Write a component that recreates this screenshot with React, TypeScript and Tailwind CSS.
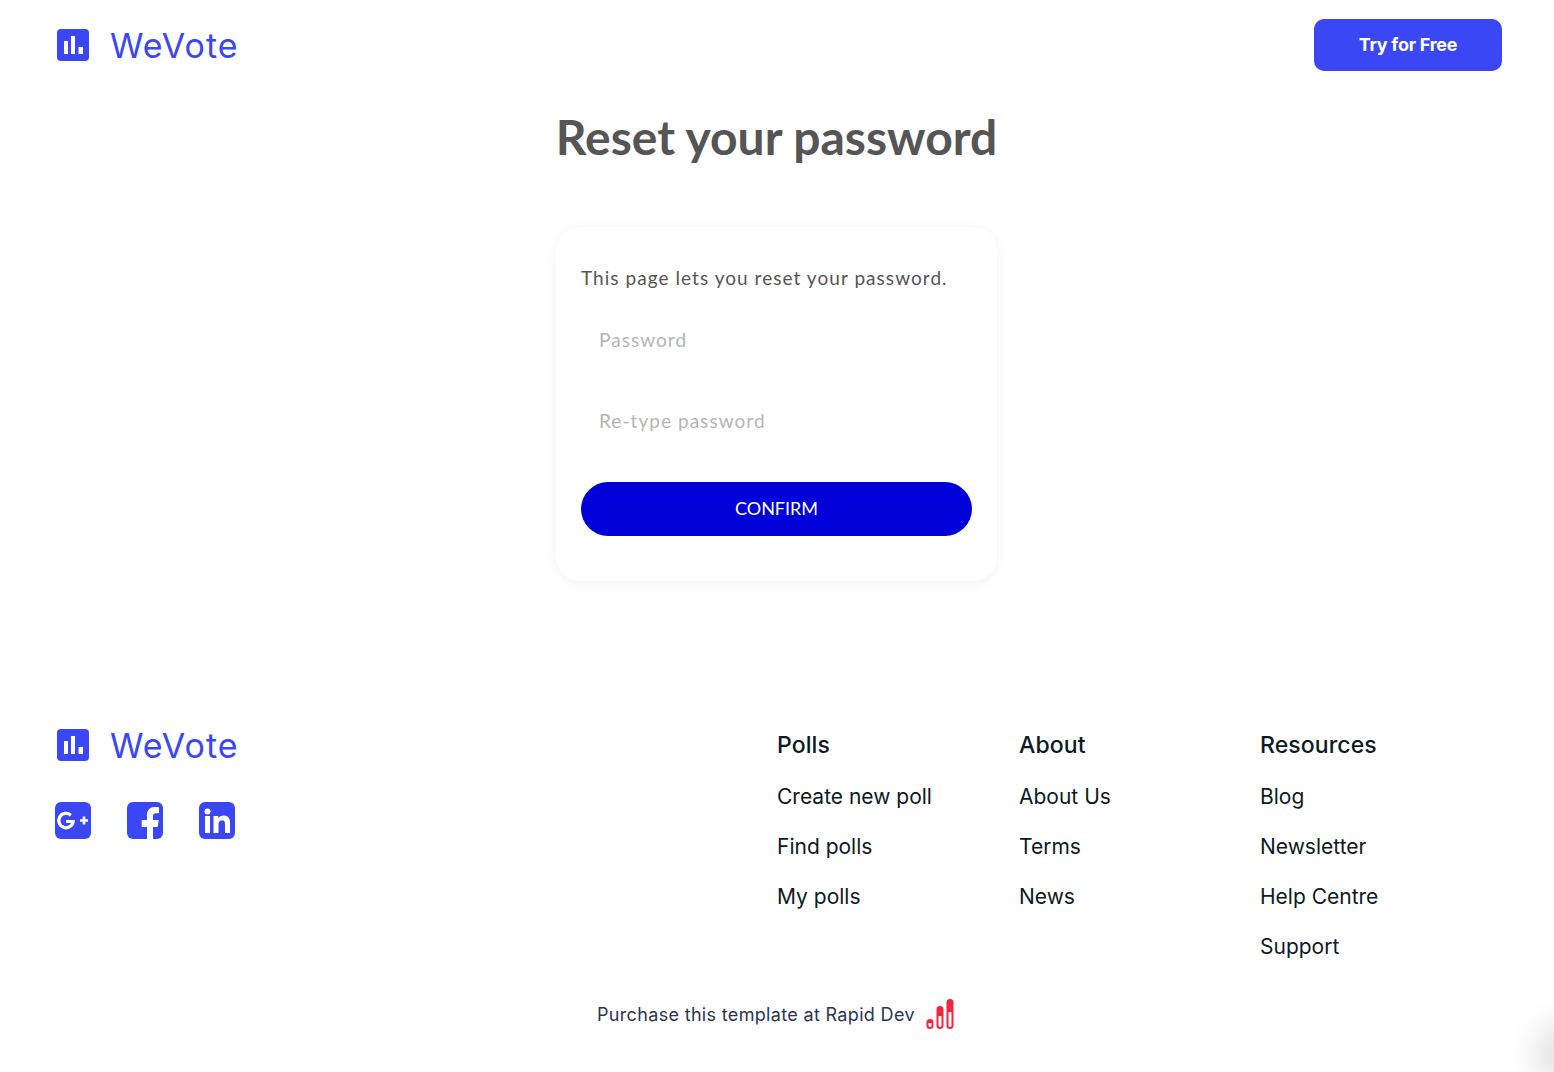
import { useState } from "react";

const poppins = "font-['Inter',sans-serif]";
const lato = "font-['Lato',sans-serif]";

const columns = [
  { title: "Polls", width: "w-[242px]", links: ["Create new poll", "Find polls", "My polls"] },
  { title: "About", width: "w-[241px]", links: ["About Us", "Terms", "News"] },
  { title: "Resources", width: "w-[242px]", links: ["Blog", "Newsletter", "Help Centre", "Support"] },
];

function Logo() {
  return (
    <div className="flex items-center">
      <svg width="34" height="34" viewBox="0 0 34 34" className="ml-[1px]">
        <rect x="1" y="1" width="32" height="32" rx="4" fill="#3b47f5" />
        <rect x="8" y="13" width="4" height="13" fill="#fff" />
        <rect x="15" y="8" width="4" height="18" fill="#fff" />
        <rect x="22.500" y="19" width="4.500" height="7" fill="#fff" />
      </svg>
      <span className={`-mb-[1px] ml-[20px] mt-[1px] text-[34px] leading-none tracking-[1px] text-[#3b47f5] ${poppins}`}>WeVote</span>
    </div>
  );
}

function Social({ children }: { children: React.ReactNode }) {
  return <div className="h-[37px] w-[36px] overflow-hidden rounded-[6px] bg-[#3b47f5] text-white">{children}</div>;
}

export default function App() {
  const [password, setPassword] = useState("");
  const [retype, setRetype] = useState("");

  return (
    <div className="relative flex min-h-[1072px] flex-col overflow-hidden bg-white">
      <header className="flex h-[90px] items-center justify-between pl-[55px] pr-[52px]">
        <Logo />
        <button className={`h-[52px] w-[188px] rounded-[10px] bg-[#3b47f5] pb-[2px] text-[18px] font-bold tracking-[-0.25px] text-white ${poppins}`}>
          Try for Free
        </button>
      </header>

      <h1 className={`mt-[16px] pr-[1px] text-center text-[48px] font-bold leading-[62px] text-[#555] ${lato}`}>Reset your password</h1>

      <div className="mt-[59px] flex justify-center pr-[1px]">
        <div className={`h-[354px] w-[441px] rounded-[24px] bg-white px-[25px] pt-[38px] shadow-[0_2px_14px_rgba(0,0,0,0.05)] ${lato}`}>
          <p className="text-[19px] leading-[26px] tracking-[1.05px] text-[#555]">This page lets you reset your password.</p>
          <input
            value={password}
            onChange={(e) => setPassword(e.target.value)}
            placeholder="Password"
            className="mt-[23px] block h-[50px] w-full px-[18px] text-[19px] tracking-[1.05px] text-[#555] outline-none placeholder:text-[#b5b5b5]"
          />
          <input
            value={retype}
            onChange={(e) => setRetype(e.target.value)}
            placeholder="Re-type password"
            className="mt-[31px] block h-[50px] w-full px-[18px] text-[19px] tracking-[1.05px] text-[#555] outline-none placeholder:text-[#b5b5b5]"
          />
          <button className="mt-[37px] h-[54px] w-full rounded-[27px] bg-[#0000d8] pb-[2px] text-[18px] tracking-[-0.05px] text-white">CONFIRM</button>
        </div>
      </div>

      <footer className="mt-[147px] flex pl-[55px]">
        <div className="w-[722px]">
          <Logo />
          <div className="mt-[40px] flex gap-[36px]">
            <Social>
              <svg viewBox="0 0 36 37" className="h-full w-full" fill="none">
                <path d="M15.800 13.200a7.200 7.200 0 1 0 2.300 6.300h-7" stroke="#fff" strokeWidth="3.200" />
                <path d="M25 18.500h8M29 14.500v8" stroke="#fff" strokeWidth="2.600" />
              </svg>
            </Social>
            <Social>
              <svg viewBox="0 0 36 37" className="h-full w-full">
                <path d="M20 37V25h-5.300v-7H20v-5C20 8 23 5 27.500 5c1.500 0 3 .1 4.500.3v6h-3c-2 0-3 1-3 3V18h5.700l-1 7H26v12z" fill="#fff" />
              </svg>
            </Social>
            <Social>
              <svg viewBox="0 0 36 37" className="h-full w-full" fill="#fff">
                <circle cx="8.500" cy="9.500" r="3" />
                <rect x="6" y="14" width="5" height="17" />
                <path d="M14.500 14H19.300v2.400C20.300 14.800 22.200 13.600 24.700 13.600 29.300 13.600 31 16.500 31 21V31H26V22C26 19.700 25.300 18.200 23.300 18.200 21 18.200 19.500 19.700 19.500 22.300V31H14.500z" />
              </svg>
            </Social>
          </div>
        </div>
        <div className={`flex pt-[2px] ${poppins}`}>
          {columns.map((col) => (
            <div key={col.title} className={col.width}>
              <h3 className="text-[23px] font-medium leading-[30px] tracking-[0.1px] text-[#0c1a24]">{col.title}</h3>
              <ul className="mt-[12px]">
                {col.links.map((link) => (
                  <li key={link} className="h-[50px] text-[21px] leading-[50px] text-[#0c1a24]">{link}</li>
                ))}
              </ul>
            </div>
          ))}
        </div>
      </footer>

      <div className={`ml-[597px] mt-[27px] flex items-center ${poppins}`}>
        <span className="text-[18px] tracking-[0.33px] text-[#2c3550]">Purchase this template at Rapid Dev</span>
        <svg width="28" height="30" viewBox="0 0 28 30" className="ml-[11px]" fill="none" stroke="#f5253f">
          <rect x="1.500" y="21" width="5" height="8" rx="2.500" strokeWidth="2" />
          <rect x="11.500" y="8" width="5" height="21" rx="2.500" strokeWidth="2" />
          <rect x="21.500" y="1" width="5" height="28" rx="2.500" strokeWidth="2" />
          <path d="M1.500 23a2.500 2.500 0 0 1 5 0v1h-5zM11.500 10a2.500 2.500 0 0 1 5 0v7h-5zM21.500 3a2.500 2.500 0 0 1 5 0v10h-5z" fill="#f5253f" stroke="none" />
        </svg>
      </div>

      <div className="pointer-events-none absolute left-[1534px] top-[1020px] h-[70px] w-[70px] rounded-full bg-[#000]/10 blur-[14px]" />
    </div>
  );
}
